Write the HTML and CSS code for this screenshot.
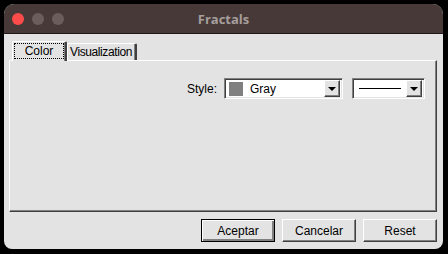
FILE: index.html
```html
<!DOCTYPE html>
<html lang="en">

<head>
    <meta charset="UTF-8">
    <title>Fractals</title>
    <link rel="stylesheet" href="styles.css">
</head>

<body>
    <div class="window">
        <div class="titlebar">
            <div class="lights">
                <span class="light close"></span>
                <span class="light"></span>
                <span class="light"></span>
            </div>
            <div class="title">Fractals</div>
        </div>

        <div class="content">
            <div class="tabs">
                <div class="tab active"><span class="focus">Color</span></div>
                <div class="tab">Visualization</div>
            </div>

            <div class="panel">
                <div class="row">
                    <span class="label">Style:</span>
                    <div class="combo color-combo">
                        <span class="swatch"></span>
                        <span class="combo-text">Gray</span>
                        <span class="drop"><span class="arrow"></span></span>
                    </div>
                    <div class="combo line-combo">
                        <span class="line"></span>
                        <span class="drop"><span class="arrow"></span></span>
                    </div>
                </div>
            </div>

            <div class="buttons">
                <button class="btn default">Aceptar</button>
                <button class="btn">Cancelar</button>
                <button class="btn">Reset</button>
            </div>
        </div>
    </div>
</body>

</html>
```

FILE: styles.css
```css
body {
    margin: 0;
    background-color: #000;
    height: 254px;
    overflow: hidden;
    font-family: "Liberation Sans", Arial, sans-serif;
}

.window {
    margin: 4px 0 0 4px;
    width: 439px;
    height: 245px;
    background-color: #e3e3e3;
    border-radius: 10px 10px 8px 8px;
    overflow: hidden;
    display: flex;
    flex-direction: column;
}

/* Title bar */
.titlebar {
    height: 29px;
    background-color: #463938;
    border-bottom: 1px solid #1e1817;
    display: flex;
    align-items: center;
    position: relative;
}

.lights {
    display: flex;
    gap: 8px;
    padding-left: 8px;
}

.light {
    width: 12px;
    height: 12px;
    border-radius: 50%;
    background-color: #6a5d5c;
}

.light.close {
    background-color: #fd4c49;
}

.title {
    position: absolute;
    left: 0;
    right: 0;
    text-align: center;
    color: #a59e9d;
    font-family: "Open Sans", "Liberation Sans", sans-serif;
    font-weight: bold;
    font-size: 13px;
}

/* Content */
.content {
    flex: 1;
    padding: 7px 6px 0 5px;
    display: flex;
    flex-direction: column;
    font-size: 11px;
    color: #000;
}

.tabs {
    display: flex;
    align-items: flex-end;
    padding-left: 3px;
    height: 19px;
    position: relative;
    z-index: 1;
}

.tab {
    height: 17px;
    width: 70px;
    box-sizing: border-box;
    padding: 0 1px 0 0;
    text-align: center;
    line-height: 16px;
    font-size: 12px;
    letter-spacing: -0.4px;
    border-top: 1px solid #fff;
    border-left: 1px solid #fff;
    border-right: 2px solid #404040;
    box-shadow: inset -1px 0 0 #808080;
    border-radius: 2px 2px 0 0;
    background-color: #e3e3e3;
}

.tab.active {
    height: 20px;
    margin-bottom: -1px;
    padding: 1px 1px 0 1px;
    width: 55px;
    letter-spacing: 0;
}

.focus {
    display: block;
    height: 16px;
    border: 1px dotted #000;
    box-sizing: border-box;
    text-align: center;
    line-height: 14px;
    font-size: 12px;
}

.panel {
    height: 152px;
    box-sizing: border-box;
    border-top: 1px solid #fff;
    border-left: 1px solid #fff;
    border-right: 1px solid #404040;
    border-bottom: 1px solid #404040;
    box-shadow: inset -1px -1px 0 #808080;
    padding: 17px 11px 0 0;
}

.row {
    display: flex;
    justify-content: flex-end;
    align-items: center;
}

.label {
    font-size: 12px;
    margin-right: 7px;
}

.combo {
    height: 21px;
    box-sizing: border-box;
    background-color: #fff;
    border-top: 1px solid #808080;
    border-left: 1px solid #808080;
    border-right: 1px solid #fff;
    border-bottom: 1px solid #fff;
    box-shadow: inset 1px 1px 0 #404040, inset -1px -1px 0 #e3e3e3;
    display: flex;
    align-items: center;
    padding: 0 2px 0 4px;
}

.color-combo {
    width: 119px;
}

.line-combo {
    width: 73px;
    margin-left: 9px;
    padding-left: 6px;
}

.swatch {
    width: 14px;
    height: 14px;
    background-color: #808080;
}

.combo-text {
    flex: 1;
    margin-left: 7px;
    font-size: 12px;
}

.line {
    flex: 1;
    height: 1px;
    background-color: #000;
    margin-right: 5px;
}

.drop {
    width: 16px;
    height: 17px;
    box-sizing: border-box;
    background-color: #e3e3e3;
    border-top: 1px solid #fff;
    border-left: 1px solid #fff;
    border-right: 1px solid #404040;
    border-bottom: 1px solid #404040;
    box-shadow: inset -1px -1px 0 #808080;
    display: flex;
    justify-content: center;
    align-items: center;
}

.arrow {
    width: 0;
    height: 0;
    border-left: 4px solid transparent;
    border-right: 4px solid transparent;
    border-top: 4px solid #000;
}

/* Buttons */
.buttons {
    display: flex;
    justify-content: flex-end;
    gap: 7px;
    margin-top: 7px;
}

.btn {
    width: 74px;
    height: 23px;
    box-sizing: border-box;
    background-color: #e3e3e3;
    font-family: "Liberation Sans", Arial, sans-serif;
    font-size: 12px;
    color: #000;
    padding: 0;
    border-top: 1px solid #fff;
    border-left: 1px solid #fff;
    border-right: 1px solid #404040;
    border-bottom: 1px solid #404040;
    box-shadow: inset -1px -1px 0 #808080;
}

.btn.default {
    border: 1px solid #000;
    box-shadow: inset 1px 1px 0 #fff, inset -2px -2px 0 #808080;
}
```
